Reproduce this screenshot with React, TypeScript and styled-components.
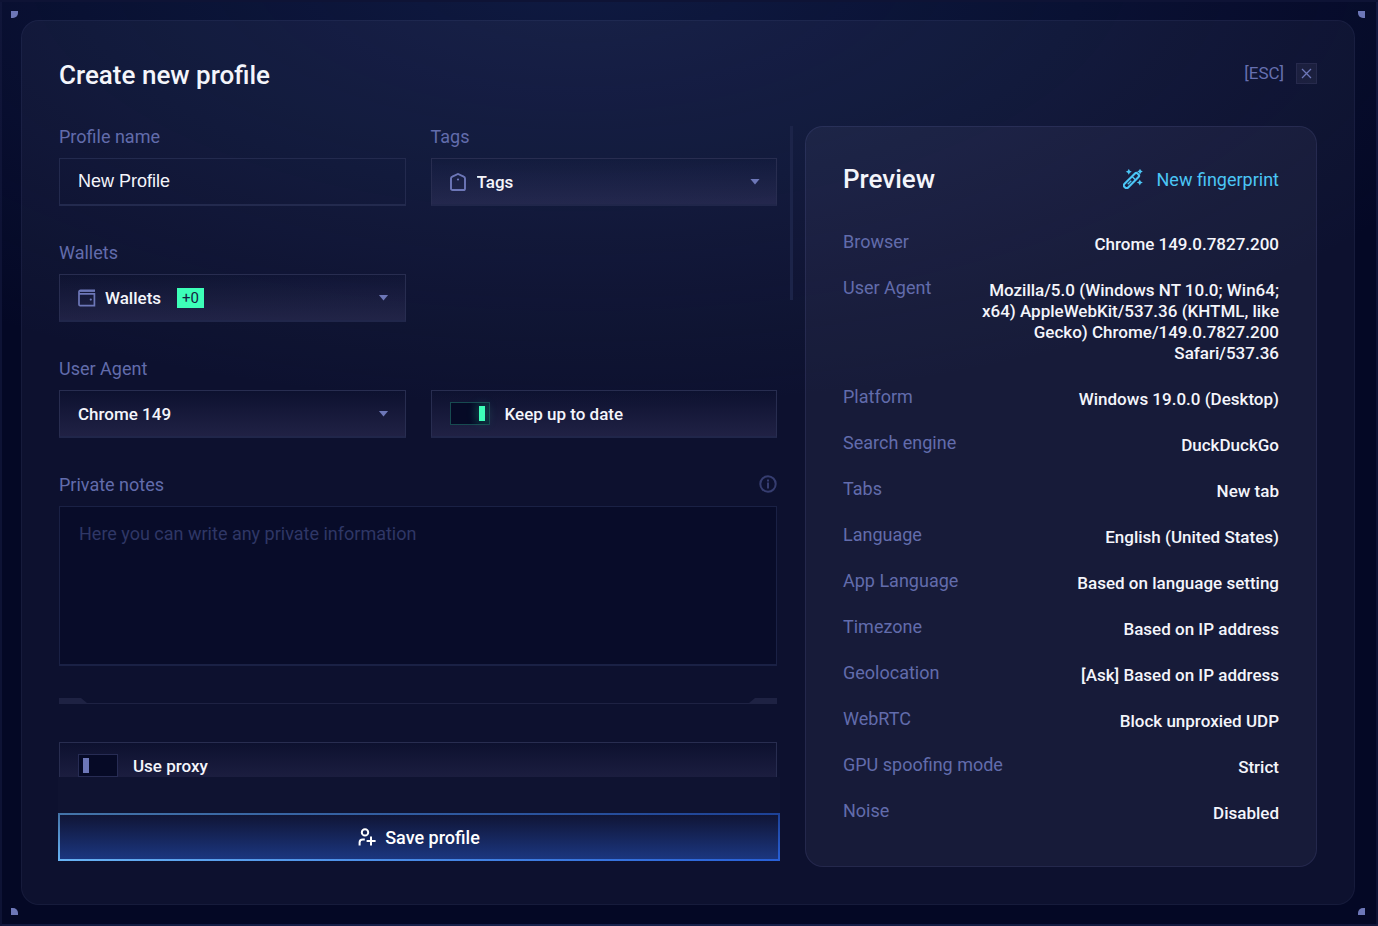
import React, { useState } from "react";
import styled, { createGlobalStyle } from "styled-components";

const GlobalStyle = createGlobalStyle`
  *, *::before, *::after { box-sizing: border-box; }
  body {
    margin: 0;
    background: #040825;
    color: #f4f5fb;
    font-family: Roboto, "Liberation Sans", sans-serif;
    font-size: 17px;
  }
  h1, h2, dl, dd { margin: 0; }
  button, input, textarea, select { font: inherit; color: inherit; }
`;

const Frame = styled.div`
  position: relative;
  display: flex;
  height: 100vh;
  min-height: 720px;
  border: 2px solid rgba(110, 120, 200, 0.1);
  padding: 18px 21px 19px 19px;
  background:
    radial-gradient(ellipse 72% 48% at 42% -4%, rgba(44, 74, 140, 0.28), transparent 100%),
    #040825;
`;

const Corner = styled.i<{ $v: "top" | "bottom"; $h: "left" | "right" }>`
  position: absolute;
  ${(p) => p.$v}: 9px;
  ${(p) => p.$h}: ${(p) => (p.$h === "left" ? 9 : 11)}px;
  width: 7px;
  height: 7px;
  background: #6d77b8;
  border-${(p) => (p.$v === "top" ? "bottom" : "top")}-${(p) => (p.$h === "left" ? "right" : "left")}-radius: 5px;
`;

const Panel = styled.main`
  display: flex;
  flex-direction: column;
  flex: 1;
  min-width: 0;
  padding: 38px 37px 37px;
  border: 1px solid rgba(130, 135, 210, 0.08);
  border-radius: 18px;
  background: rgba(205, 190, 235, 0.052);
`;

const Header = styled.header`
  display: flex;
  justify-content: space-between;
  align-items: flex-start;
  margin-bottom: 35px;
`;

const Title = styled.h1`
  font-size: 26px;
  line-height: 32px;
  font-weight: 500;
`;

const CloseGroup = styled.div`
  display: flex;
  align-items: center;
  gap: 12px;
  height: 28px;
  color: #6670b0;
`;

const CloseButton = styled.button`
  display: grid;
  place-items: center;
  width: 21px;
  height: 21px;
  padding: 0;
  border: 1px solid rgba(140, 140, 210, 0.1);
  background: rgba(255, 255, 255, 0.05);
  color: #6d77b8;
`;

const Columns = styled.div`
  display: grid;
  grid-template-columns: minmax(0, 734fr) minmax(0, 512fr);
  gap: 12px;
  flex: 1;
  min-height: 0;
`;

const FormColumn = styled.form`
  display: flex;
  flex-direction: column;
  min-height: 0;
  padding-bottom: 6px;
`;

const ScrollArea = styled.div`
  display: flex;
  gap: 13px;
  flex: 1;
  min-height: 0;
  overflow: hidden;
`;

const Fields = styled.div`
  display: flex;
  flex-direction: column;
  gap: 36px;
  flex: 1;
  min-width: 0;
`;

const Thumb = styled.div`
  width: 3px;
  height: 174px;
  background: #1c2449;
`;

const Row = styled.div`
  display: grid;
  grid-template-columns: 1fr 1fr;
  gap: 25px;
  align-items: end;
`;

const Field = styled.div`
  display: flex;
  flex-direction: column;
  gap: 12px;
`;

const LabelLine = styled.div`
  display: flex;
  justify-content: space-between;
  align-items: center;
  height: 20px;
  font-size: 18px;
  color: #626cac;
`;

const TextInput = styled.input`
  height: 48px;
  width: 100%;
  padding: 0 18px;
  border: 1px solid #232a4e;
  border-bottom-width: 2px;
  background: transparent;
  font-family: "Liberation Sans", Arial, sans-serif;
  font-size: 18px;
  outline: none;
`;

const Box = styled.div`
  display: flex;
  flex-shrink: 0;
  align-items: center;
  height: 48px;
  padding: 0 16px 0 18px;
  border: 1px solid #282d50;
  border-bottom: 2px solid #20264a;
  background: linear-gradient(rgba(86, 80, 130, 0), rgba(86, 80, 130, 0.26));
  font-weight: 500;
`;

const ToggleBox = styled(Box).attrs({ as: "label" })`
  gap: 15px;
`;

const BoxIcon = styled.span`
  display: flex;
  width: 18px;
  margin-right: 9px;
  color: #6d77b8;
`;

const Select = styled.select<{ $grow?: boolean }>`
  appearance: none;
  flex: ${(p) => (p.$grow ? "1" : "none")};
  padding: 0;
  border: 0;
  background: transparent;
  outline: none;
`;

const Badge = styled.span`
  margin-left: 15px;
  padding: 0 5px;
  background: #3dffb8;
  color: #14213f;
  font-size: 15px;
  line-height: 20px;
  font-weight: 400;
`;

const Caret = styled.i`
  margin-left: auto;
  width: 10px;
  height: 6px;
  background: #6d77b8;
  clip-path: polygon(0 0, 100% 0, 50% 100%);
`;

const Switch = styled.input`
  appearance: none;
  display: flex;
  align-items: center;
  width: 40px;
  height: 23px;
  margin: 0;
  padding: 0 4px;
  border: 1px solid #272c54;
  background: #060a26;

  &::before {
    content: "";
    width: 6px;
    height: 15px;
    background: #6d77b8;
  }

  &:checked {
    justify-content: flex-end;
    border-color: #174a50;
    background: linear-gradient(to right, #060a26 50%, #0b2438);
  }

  &:checked::before {
    background: #3dffb8;
    box-shadow: 0 0 12px rgba(61, 255, 184, 0.35);
  }
`;

const Notes = styled.textarea`
  display: block;
  width: 100%;
  height: 160px;
  padding: 16px 19px;
  border: 1px solid #1a2145;
  border-bottom: 2px solid #1a2145;
  background: #080c29;
  font-size: 18px;
  line-height: 21px;
  resize: none;
  outline: none;

  &::placeholder { color: #2f3766; opacity: 1; }
`;

const Divider = styled.div`
  display: flex;
  flex-shrink: 0;
  justify-content: space-between;
  height: 6px;
  margin: -4px 0 2px;
  border-bottom: 1px solid #1e2243;
`;

const DividerEnd = styled.i<{ $right?: boolean }>`
  width: 28px;
  background: #1e2243;
  clip-path: ${(p) =>
    p.$right ? "polygon(6px 0, 100% 0, 100% 100%, 0 100%)" : "polygon(0 0, 22px 0, 100% 100%, 0 100%)"};
`;

const Footer = styled.div`
  margin-left: -1px;
  margin-right: 13px;
  padding-top: 36px;
  background: rgba(255, 255, 255, 0.01);
`;

const SaveButton = styled.button`
  display: flex;
  justify-content: center;
  align-items: center;
  gap: 9px;
  width: 100%;
  height: 48px;
  border: 2px solid transparent;
  background:
    linear-gradient(#101536, #1b367f) padding-box,
    linear-gradient(rgba(12, 18, 50, 0.4), transparent) border-box,
    linear-gradient(to right, #68b4f5, #2860d8) border-box;
  color: #ffffff;
  font-size: 18px;
  font-weight: 500;
`;

const Preview = styled.section`
  padding: 36px 37px;
  border: 1px solid rgba(130, 135, 210, 0.13);
  border-radius: 18px;
  background: rgba(215, 210, 255, 0.052);
`;

const PreviewHeader = styled.div`
  display: flex;
  justify-content: space-between;
  align-items: center;
  margin-bottom: 39px;
`;

const FingerprintButton = styled.button`
  display: flex;
  align-items: center;
  gap: 14px;
  padding: 0;
  border: 0;
  background: none;
  color: #4bc6f5;
  font-size: 18px;
`;

const Details = styled.dl`
  display: flex;
  flex-direction: column;
  gap: 25px;
`;

const Detail = styled.div`
  display: flex;
  justify-content: space-between;
  align-items: flex-start;
`;

const Term = styled.dt`
  font-size: 18px;
  line-height: 16px;
  color: #626cac;
`;

const Value = styled.dd`
  max-width: 71%;
  line-height: 21px;
  font-weight: 500;
  text-align: right;
`;

const details: [string, string][] = [
  ["Browser", "Chrome 149.0.7827.200"],
  ["User Agent", "Mozilla/5.0 (Windows NT 10.0; Win64; x64) AppleWebKit/537.36 (KHTML, like Gecko) Chrome/149.0.7827.200 Safari/537.36"],
  ["Platform", "Windows 19.0.0 (Desktop)"],
  ["Search engine", "DuckDuckGo"],
  ["Tabs", "New tab"],
  ["Language", "English (United States)"],
  ["App Language", "Based on language setting"],
  ["Timezone", "Based on IP address"],
  ["Geolocation", "[Ask] Based on IP address"],
  ["WebRTC", "Block unproxied UDP"],
  ["GPU spoofing mode", "Strict"],
  ["Noise", "Disabled"],
];

const TagIcon = () => (
  <svg width="16" height="18" viewBox="0 0 16 18" fill="none" stroke="currentColor" strokeWidth="1.9">
    <path d="M1 5.6Q1 4.2 2.3 3.7L8 1L13.7 3.7Q15 4.2 15 5.6V15.4Q15 17 13.4 17H2.6Q1 17 1 15.4Z" />
    <circle cx="8" cy="6.5" r="1.1" fill="currentColor" stroke="none" />
  </svg>
);

const WalletIcon = () => (
  <svg width="18" height="18" viewBox="0 0 18 18" fill="none" stroke="currentColor" strokeWidth="1.7">
    <path d="M17 1.4H2.6Q1 1.4 1 3V15.4Q1 16.6 2.2 16.6H16.4V4.9H1.6" />
    <path d="M2 2.4H17" strokeWidth="1" />
    <circle cx="12.8" cy="10.6" r="1.1" fill="currentColor" stroke="none" />
  </svg>
);

const InfoIcon = () => (
  <svg width="18" height="18" viewBox="0 0 18 18" fill="none" stroke="#363d70" strokeWidth="2">
    <circle cx="9" cy="9" r="7.7" />
    <path d="M9 7.6V13.4M9 4.6V6.4" />
  </svg>
);

const CloseIcon = () => (
  <svg width="11" height="11" viewBox="0 0 11 11" fill="none" stroke="currentColor" strokeWidth="1.3">
    <path d="M1 1L10 10M10 1L1 10" />
  </svg>
);

const UserPlusIcon = () => (
  <svg width="18" height="18" viewBox="0 0 18 18" fill="none" stroke="currentColor" strokeWidth="2">
    <circle cx="7" cy="4.4" r="3.2" />
    <path d="M1.6 17.5V14.6Q1.6 11.4 4.8 11.4H6.8M13 8.6V17.4M8.6 13H17.6" />
  </svg>
);

const WandIcon = () => (
  <svg width="20" height="20" viewBox="0 0 20 20" fill="currentColor">
    <g transform="rotate(-45 8.5 11.5)" fill="none" stroke="currentColor" strokeWidth="2.1">
      <rect x="-0.9" y="9" width="18.6" height="5" rx="1.8" />
      <path d="M11.8 9V14M3.2 11.5H8.2" strokeWidth="1.4" />
    </g>
    <path d="M5.8 -0.2L6.8 1.8L8.8 2.8L6.8 3.8L5.8 5.8L4.8 3.8L2.8 2.8L4.8 1.8Z" />
    <path d="M17 -0.2L18 1.6L19.8 2.6L18 3.6L17 5.4L16 3.6L14.2 2.6L16 1.6Z" />
    <path d="M16.8 10.6L17.8 12.6L19.8 13.6L17.8 14.6L16.8 16.6L15.8 14.6L13.8 13.6L15.8 12.6Z" />
  </svg>
);

export default function App() {
  const [name, setName] = useState("New Profile");
  const [keep, setKeep] = useState(true);
  const [proxy, setProxy] = useState(false);

  return (
    <>
      <GlobalStyle />
      <Frame>
        <Corner $v="top" $h="left" />
        <Corner $v="top" $h="right" />
        <Corner $v="bottom" $h="left" />
        <Corner $v="bottom" $h="right" />
        <Panel>
          <Header>
            <Title>Create new profile</Title>
            <CloseGroup>
              <span>[ESC]</span>
              <CloseButton type="button" aria-label="Close">
                <CloseIcon />
              </CloseButton>
            </CloseGroup>
          </Header>
          <Columns>
            <FormColumn onSubmit={(e) => e.preventDefault()}>
              <ScrollArea>
                <Fields>
                  <Row>
                    <Field>
                      <LabelLine><label htmlFor="name">Profile name</label></LabelLine>
                      <TextInput id="name" value={name} onChange={(e) => setName(e.target.value)} />
                    </Field>
                    <Field>
                      <LabelLine><label htmlFor="tags">Tags</label></LabelLine>
                      <Box>
                        <BoxIcon><TagIcon /></BoxIcon>
                        <Select id="tags" $grow><option>Tags</option></Select>
                        <Caret />
                      </Box>
                    </Field>
                  </Row>
                  <Row>
                    <Field>
                      <LabelLine><label htmlFor="wallets">Wallets</label></LabelLine>
                      <Box>
                        <BoxIcon><WalletIcon /></BoxIcon>
                        <Select id="wallets"><option>Wallets</option></Select>
                        <Badge>+0</Badge>
                        <Caret />
                      </Box>
                    </Field>
                  </Row>
                  <Row>
                    <Field>
                      <LabelLine><label htmlFor="agent">User Agent</label></LabelLine>
                      <Box>
                        <Select id="agent" $grow><option>Chrome 149</option></Select>
                        <Caret />
                      </Box>
                    </Field>
                    <ToggleBox>
                      <Switch type="checkbox" checked={keep} onChange={(e) => setKeep(e.target.checked)} />
                      Keep up to date
                    </ToggleBox>
                  </Row>
                  <Field>
                    <LabelLine>
                      <label htmlFor="notes">Private notes</label>
                      <InfoIcon />
                    </LabelLine>
                    <Notes id="notes" placeholder="Here you can write any private information" />
                  </Field>
                  <Divider>
                    <DividerEnd />
                    <DividerEnd $right />
                  </Divider>
                  <ToggleBox>
                    <Switch type="checkbox" checked={proxy} onChange={(e) => setProxy(e.target.checked)} />
                    Use proxy
                  </ToggleBox>
                </Fields>
                <Thumb />
              </ScrollArea>
              <Footer>
                <SaveButton type="submit">
                  <UserPlusIcon />
                  Save profile
                </SaveButton>
              </Footer>
            </FormColumn>
            <Preview>
              <PreviewHeader>
                <Title as="h2">Preview</Title>
                <FingerprintButton type="button">
                  <WandIcon />
                  New fingerprint
                </FingerprintButton>
              </PreviewHeader>
              <Details>
                {details.map(([term, value]) => (
                  <Detail key={term}>
                    <Term>{term}</Term>
                    <Value>{value}</Value>
                  </Detail>
                ))}
              </Details>
            </Preview>
          </Columns>
        </Panel>
      </Frame>
    </>
  );
}
